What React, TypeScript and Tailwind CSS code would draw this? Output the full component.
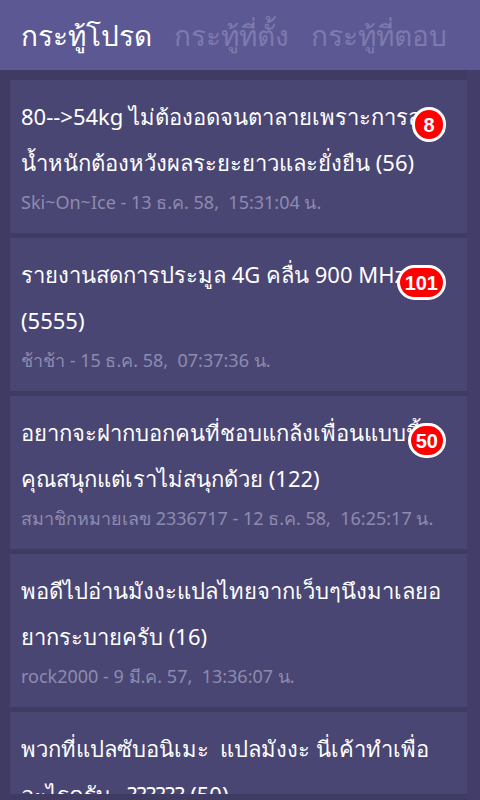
const topics = [
  {
    lines: ["80-->54kg ไม่ต้องอดจนตาลายเพราะการล", "น้ำหนักต้องหวังผลระยะยาวและยั่งยืน (56)"],
    meta: "Ski~On~Ice - 13 ธ.ค. 58,  15:31:04 น.",
    badge: "8",
  },
  {
    lines: ["รายงานสดการประมูล 4G คลื่น 900 MHz", "(5555)"],
    meta: "ช้าช้า - 15 ธ.ค. 58,  07:37:36 น.",
    badge: "101",
  },
  {
    lines: ["อยากจะฝากบอกคนที่ชอบแกล้งเพื่อนแบบนี้", "คุณสนุกแต่เราไม่สนุกด้วย (122)"],
    meta: "สมาชิกหมายเลข 2336717 - 12 ธ.ค. 58,  16:25:17 น.",
    badge: "50",
  },
  {
    lines: ["พอดีไปอ่านมังงะแปลไทยจากเว็บๆนึงมาเลยอ", "ยากระบายครับ (16)"],
    meta: "rock2000 - 9 มี.ค. 57,  13:36:07 น.",
  },
  {
    lines: ["พวกที่แปลซับอนิเมะ  แปลมังงะ นี่เค้าทำเพื่อ", "อะไรครับ   ?????? (50)"],
    meta: "",
  },
];

export default function App() {
  return (
    <div className="w-[480px] h-[800px] overflow-hidden bg-[#3f3b63] flex flex-col font-['Noto_Sans',sans-serif]">
      {/* Tabs */}
      <div className="h-[70px] shrink-0 bg-[#5c5893] flex items-center gap-[22px] pl-[21px] text-[28px] whitespace-nowrap">
        <span className="text-white">กระทู้โปรด</span>
        <span className="text-[#7e7aae]">กระทู้ที่ตั้ง</span>
        <span className="text-[#7e7aae]">กระทู้ที่ตอบ</span>
      </div>

      {/* List + scroll strip */}
      <div className="flex-1 min-h-0 flex">
        <div className="flex-1 min-w-0 flex flex-col pt-[10px] pl-[10px]">
          <div className="flex-1 min-h-0 mb-[6px] overflow-hidden flex flex-col gap-[5px]">
            {topics.map((t, i) => (
              <div key={i} className="relative shrink-0 h-[153px] bg-[#4a4673] px-[11px] pt-[13px]">
                {t.lines.map((l) => (
                  <p key={l} className="text-white text-[22px] leading-[46px] whitespace-pre overflow-hidden">
                    {l}
                  </p>
                ))}
                {t.meta && (
                  <p className="text-[#8e8bb0] text-[18px] leading-[34px] whitespace-pre">{t.meta}</p>
                )}
                {t.badge && (
                  <span className="absolute top-[27px] right-[21px] min-w-[34px] h-[35px] px-[5px] rounded-full bg-[#f00] border-[3px] border-white text-white text-[20px] font-bold leading-none flex items-center justify-center font-['Liberation_Sans',sans-serif]">
                    {t.badge}
                  </span>
                )}
              </div>
            ))}
          </div>
        </div>
        <div className="w-[13px] shrink-0 bg-[#423e69]" />
      </div>
    </div>
  );
}
